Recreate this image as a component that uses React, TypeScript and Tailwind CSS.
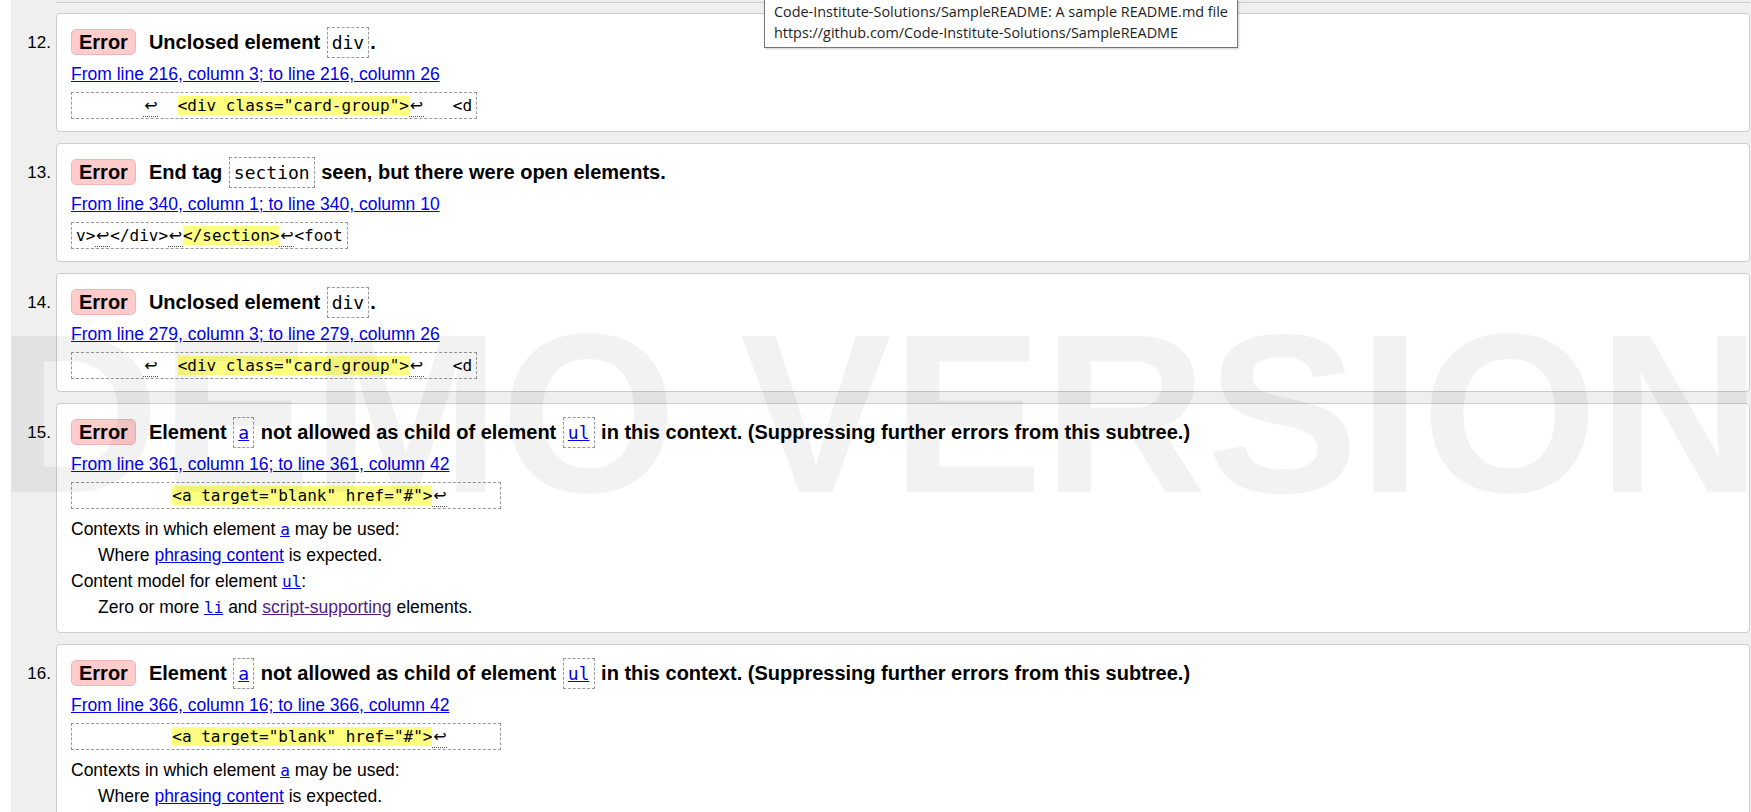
import type { ReactNode } from "react";

const mono = "font-['DejaVu_Sans_Mono',monospace]";

function Lf() {
  return (
    <span className="inline-block w-[15px] border-b border-dotted border-[#555] text-center font-['DejaVu_Sans',sans-serif] leading-[20px]">
      ↩
    </span>
  );
}

function Hl({ children }: { children: ReactNode }) {
  return <span className="bg-[#ffff80]">{children}</span>;
}

function Tag({ children, link }: { children: ReactNode; link?: boolean }) {
  return (
    <code
      className={`${mono} mx-px inline-block border border-dashed border-[#999] px-[4px] text-[18px] font-normal leading-[29px] ${
        link ? "text-[#0000ee] underline" : ""
      }`}
    >
      {children}
    </code>
  );
}

function Code({ children }: { children: ReactNode }) {
  return <code className={`${mono} text-[16px] leading-none text-[#0000ee] underline`}>{children}</code>;
}

function A({ children, visited }: { children: ReactNode; visited?: boolean }) {
  return <a className={visited ? "text-[#551a8b] underline" : "text-[#0000ee] underline"}>{children}</a>;
}

function Item({
  n,
  title,
  loc,
  extract,
  children,
}: {
  n: number;
  title: ReactNode;
  loc: string;
  extract: ReactNode;
  children?: ReactNode;
}) {
  return (
    <div className="mb-[11px] flex">
      <div className="w-[45px] shrink-0 pr-[5px] pt-[17px] text-right text-[17px] leading-[26px]">{n}.</div>
      <div className="mr-px flex-1 rounded-[4px] border border-[#cdcdcd] bg-white pb-[12px] pl-[14px] pt-[12px]">
        <div className="flex h-[32px] items-center">
          <span className="mr-[13px] rounded-[5px] border border-[#efb6b6] bg-[#ffcccc] px-[7px] text-[20px] font-bold leading-[24px]">
            Error
          </span>
          <span className="whitespace-pre text-[20px] font-bold">{title}</span>
        </div>
        <div className="mt-[3px] text-[17.5px] leading-[26px]">
          <A>{loc}</A>
        </div>
        <div
          className={`${mono} mt-[5px] inline-block whitespace-pre border border-dashed border-[#999] px-[4px] text-[16px] leading-[25px]`}
        >
          {extract}
        </div>
        {children && <div className="mt-[7px] text-[17.5px] leading-[26px]">{children}</div>}
      </div>
    </div>
  );
}

const cardGroup = (
  <>
    {"       "}
    <Lf />
    {"  "}
    <Hl>{'<div class="card-group">'}</Hl>
    <Lf />
    {"   <d"}
  </>
);

const aExtract = (
  <>
    {"          "}
    <Hl>{'<a target="blank" href="#">'}</Hl>
    <Lf />
    {"     "}
  </>
);

const aTitle = (
  <>
    Element <Tag link>a</Tag> not allowed as child of element <Tag link>ul</Tag> in this context. (Suppressing further
    errors from this subtree.)
  </>
);

export default function App() {
  return (
    <div className="relative h-[812px] overflow-hidden bg-white font-['Liberation_Sans',Arial,sans-serif] text-black">
      <div className="ml-[11px] h-full bg-[#efefef]">
        <div className="mb-[10px] ml-[45px] mr-px h-[3px] border-b border-[#cdcdcd]" />
        <Item
          n={12}
          title={<>Unclosed element <Tag>div</Tag>.</>}
          loc="From line 216, column 3; to line 216, column 26"
          extract={cardGroup}
        />
        <Item
          n={13}
          title={<>End tag <Tag>section</Tag> seen, but there were open elements.</>}
          loc="From line 340, column 1; to line 340, column 10"
          extract={
            <>
              {"v>"}
              <Lf />
              {"</div>"}
              <Lf />
              <Hl>{"</section>"}</Hl>
              <Lf />
              {"<foot"}
            </>
          }
        />
        <Item
          n={14}
          title={<>Unclosed element <Tag>div</Tag>.</>}
          loc="From line 279, column 3; to line 279, column 26"
          extract={cardGroup}
        />
        <Item n={15} title={aTitle} loc="From line 361, column 16; to line 361, column 42" extract={aExtract}>
          <div>
            Contexts in which element <Code>a</Code> may be used:
          </div>
          <div className="pl-[27px]">
            Where <A>phrasing content</A> is expected.
          </div>
          <div>
            Content model for element <Code>ul</Code>:
          </div>
          <div className="pl-[27px]">
            Zero or more <Code>li</Code> and <A visited>script-supporting</A> elements.
          </div>
        </Item>
        <Item n={16} title={aTitle} loc="From line 366, column 16; to line 366, column 42" extract={aExtract}>
          <div>
            Contexts in which element <Code>a</Code> may be used:
          </div>
          <div className="pl-[27px]">
            Where <A>phrasing content</A> is expected.
          </div>
          <div>
            Content model for element <Code>ul</Code>:
          </div>
        </Item>
      </div>

      <div className="pointer-events-none absolute left-[-4px] top-[300px] z-10 whitespace-nowrap text-[227px] font-bold leading-none text-[rgba(0,0,0,0.05)]">
        DEMO VERSION
      </div>

      <div className="absolute left-[764px] top-0 z-20 w-[474px] border border-t-0 border-[#767676] bg-white px-[9px] pb-[4px] pt-px font-['Open_Sans',sans-serif] text-[14.4px] leading-[21px] text-[#1e1e1e] shadow-[1px_1px_2px_rgba(0,0,0,0.2)]">
        <div>Code-Institute-Solutions/SampleREADME: A sample README.md file</div>
        <div>https://github.com/Code-Institute-Solutions/SampleREADME</div>
      </div>
    </div>
  );
}
